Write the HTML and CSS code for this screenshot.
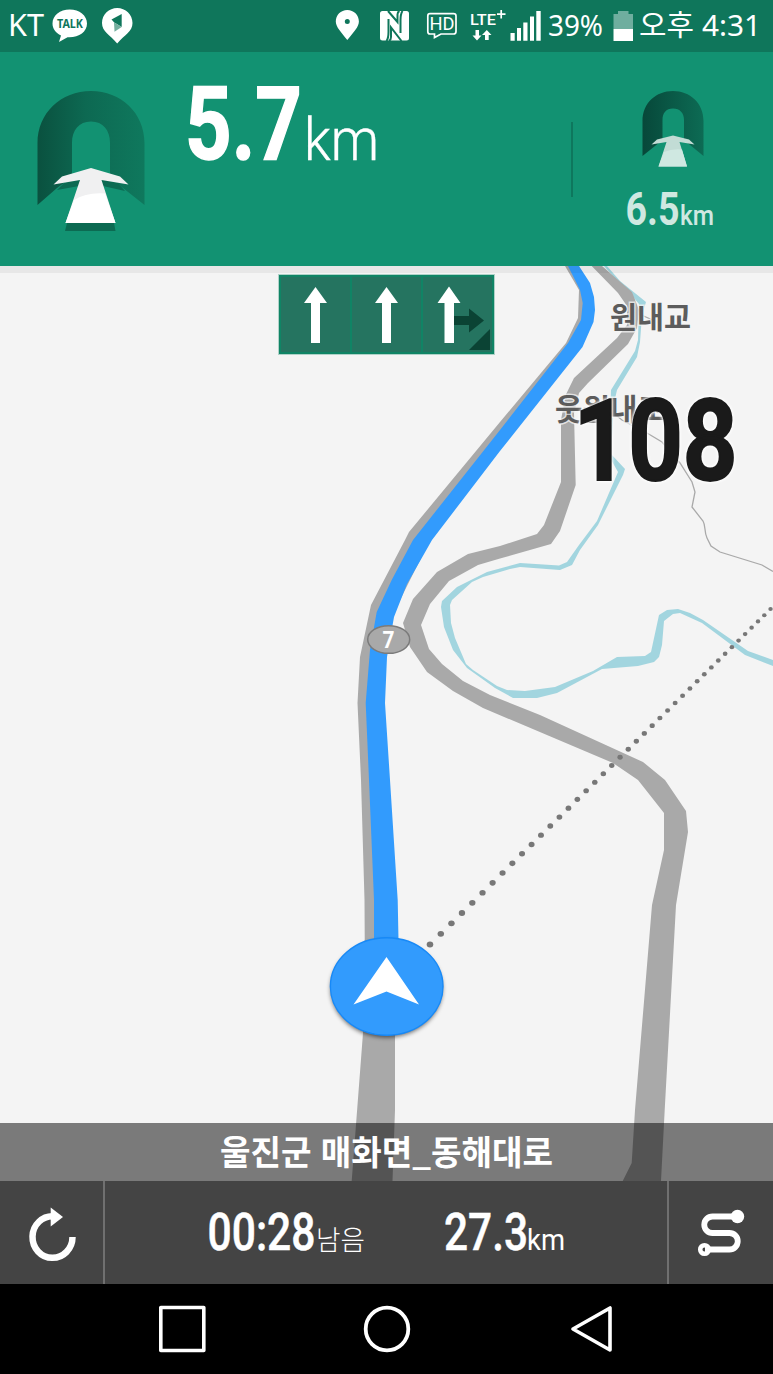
FILE: index.html
```html
<!DOCTYPE html>
<html lang="ko">
<head>
    <meta charset="UTF-8">
    <meta name="viewport" content="width=device-width, initial-scale=1.0">
    <title>Navigation</title>
    <link rel="stylesheet" href="styles.css">
</head>
<body>
    <div class="status-bar">
        <svg class="status-left" width="140" height="52" viewBox="0 0 140 52">
            <text x="8" y="36" font-size="31" textLength="36" lengthAdjust="spacingAndGlyphs">KT</text>
            <path d="M69.700 9.500C60 9.500 52.500 15.500 52.500 23.500C52.500 28.700 55.800 33 61 35.500L59 42L67.500 37.300C78.500 38 87 32 87 23.500C87 15.500 79.500 9.500 69.700 9.500Z"/>
            <text class="talk" x="57" y="28" font-size="12" textLength="26" lengthAdjust="spacingAndGlyphs">TALK</text>
            <path d="M117.200 8C109 8 102 14.500 102 23C102 32 110 34.500 117.200 43.500C124.500 34.500 132.500 32 132.500 23C132.500 14.500 125.500 8 117.200 8Z"/>
            <path fill="#0f765b" d="M111.500 19.500L121.700 14V27L114 22.200Z"/>
            <path fill="#73ae9e" d="M114 22.200L121.700 27L114.500 31.700Z"/>
        </svg>
        <svg class="status-right" width="453" height="52" viewBox="320 0 453 52">
            <path fill-rule="evenodd" d="M347.300 10C340.800 10 335.800 15 335.800 21.500C335.800 27 341 32 347.300 40C353.700 32 358.900 27 358.900 21.500C358.900 15 353.800 10 347.300 10ZM347.300 19A2.500 2.500 0 1 1 347.300 24A2.500 2.500 0 1 1 347.300 19Z"/>
            <rect x="380" y="11" width="29" height="29.500" rx="2.500"/>
            <path class="cut" d="M388 11L397.500 22V14.500Q397.500 12 399.500 11M401.500 41L391 27.500V37Q391 40 389 41M388.500 19V32Q388.500 38 386.500 41M400.500 33V20Q400.500 14 402.500 11"/>
            <path class="line" stroke-width="1.700" d="M430 13.700H453.500Q456 13.700 456 16V31.500Q456 34 453.500 34H441L434.500 37.500V34H430Q427.800 34 427.800 31.500V16Q427.800 13.700 430 13.700Z"/>
            <text class="hd" x="429.500" y="30.300" font-size="18.500" textLength="25" lengthAdjust="spacingAndGlyphs">HD</text>
            <text class="lte" x="470" y="25" font-size="15.500" textLength="26" lengthAdjust="spacingAndGlyphs">LTE</text>
            <path class="line" stroke-width="1.700" d="M501.200 10V18.500M497 14.200H505.500"/>
            <path d="M475.500 30H479V35.500H481.500L477 40.500L472.500 35.500H475.500ZM485 40H488.700V35H491.500L486.800 30L482 35H485Z"/>
            <path d="M510.500 33H514.700V40.700H510.500ZM517 28H521V40.700H517ZM523.300 22.500H527.500V40.700H523.300ZM530 16.500H534V40.700H530ZM536.300 11H540.700V40.700H536.300Z"/>
            <text x="548" y="36" font-size="29" textLength="55" lengthAdjust="spacingAndGlyphs">39%</text>
            <path fill="#6fae9f" d="M613.500 14H618V11H628.500V14H633V29H613.500Z"/>
            <path d="M613.500 29H633V41H613.500Z"/>
            <text x="639" y="36" font-size="29" textLength="55" lengthAdjust="spacingAndGlyphs">오후</text>
            <text x="702" y="36" font-size="29" textLength="59" lengthAdjust="spacingAndGlyphs">4:31</text>
        </svg>
    </div>

    <div class="guide">
        <div class="guide-now">
            <svg class="tunnel" width="108" height="141" viewBox="0 0 108 141">
                <defs>
                    <linearGradient id="arch">
                        <stop offset="0" stop-color="#0a513f"/>
                        <stop offset=".45" stop-color="#0d6952"/>
                        <stop offset="1" stop-color="#0f785d"/>
                    </linearGradient>
                </defs>
                <path fill="url(#arch)" d="M.500 114V52C.500 22 24 0 54 0S107.500 22 107.500 52V114L86 97L73 86V52C73 39 66 30.500 54 30.500S35 39 35 52V86L20 97Z"/>
                <path fill="#0c6a52" d="M20 99L27 92L54 83L81 92L88 100L66 95H42ZM30 132H77L78.500 140H28Z"/>
                <path fill="#f0f0f1" d="M54 77L83 85.500L91.500 93.500L64.500 89L78.500 132H28.500L43 89L16.500 93.500L25 85.500Z"/>
                <path fill="#fff" d="M37 109Q50 101 68 102.500L78.500 132H28.500Z"/>
            </svg>
            <svg class="distance" width="200" height="90" viewBox="180 78 200 90">
                <text class="num" x="185" y="159.300" font-size="102" textLength="117" lengthAdjust="spacingAndGlyphs">5.7</text>
                <text class="unit" x="304" y="159.500" font-size="59" textLength="75" lengthAdjust="spacingAndGlyphs">km</text>
            </svg>
        </div>
        <div class="guide-next">
            <svg width="62" height="76" viewBox="0 0 62 76">
                <defs>
                    <linearGradient id="archNext">
                        <stop offset="0" stop-color="#07483a"/>
                        <stop offset="1" stop-color="#0d6b54"/>
                    </linearGradient>
                </defs>
                <path fill="url(#archNext)" d="M.500 65V30C.500 12 14 0 31 0S61.500 12 61.500 30V65L42 49V29C42 22 38 17.500 31 17.500S20.500 22 20.500 29V49Z"/>
                <path fill="#c2dcd5" d="M31 44.500L47 48.500L52.500 53.500L37.500 51L45 75.500H16.500L24.500 51L9.500 53.500L15 48.500Z"/>
                <path fill="#cfe8e1" d="M22 61Q30 57.500 40 58.500L45 75.500H16.500Z"/>
            </svg>
            <svg class="next-distance" width="92" height="40" viewBox="624 190 92 40">
                <text class="num" x="625.500" y="225.300" font-size="46" textLength="54" lengthAdjust="spacingAndGlyphs">6.5</text>
                <text class="unit" x="680" y="225.300" font-size="27" textLength="34" lengthAdjust="spacingAndGlyphs">km</text>
            </svg>
        </div>
    </div>

    <div class="map">
        <svg class="map-canvas" width="773" height="915" viewBox="0 266 773 915">
            <!-- river -->
            <path class="river" d="M604 266L612 275L628 291L639 304L638 340L635 351L611 390L609 456L618 472L597 521L579 545L567 562L559 565.500L520 563L487 572L457 587L442 601L441 607L444 627L453 650L467 668L495 688L513 698L537 698L557 693L602 669L638 666L654 662L659 657L662 645L664 621L673 614L680 613L702 623L745 655L773 666V660L748 651L703 620L690 613L678 609L667 610L659 615L651 652L645 656L617 657L593 671L555 687L525 691L507 690L497 686L473 670L466 664L455 638L451 623L450 605L452 600L472 582L483 577L510 569L520 567L560 570L572 565L580 550L598 525L623 475L625 469L611 454L614 403L617 390L637 357L640 342L642 315L646 302L620 281L607 266Z"/>
            <!-- side paths -->
            <path class="trail" d="M639 314L655 321M604 406L622 420L647 433L662 442L680 463L692 482L695 492L692 507L703 521C706 526 704 532 707 538L711 546L720 552L762 565L773 571.500"/>
            <!-- roads -->
            <path class="road" d="M591.700 266L618 293L627 306V325L617 338L574 378L565.700 395L561 420V482L544 525L537 534L500 546L468 554L437 572L413 599L403 623L410 647L427 672L453 691L483 708L613 763L638 780L664 813V850L652 905L635 1110L631.700 1163L622.700 1181H661L664.700 1110L676 905L688 832L686 811L665 780L643 762L540 715L490 695L463 681L442 664L429 649L421 625L430 604L449 581L478 565L500 558.500L551 544L560 531L575.700 485L574 413L579 393L588 383L628 344L637 328L639 310L632 292L602 266Z"/>
            <path class="road" d="M565 266L579 290L578 318L566 343L500 422L409 532L405 540L371 605L360 657L357.500 703L361 780L364.500 900L365 990L363 1033L351.700 1181H392.500L395 1110V940H385L375 700L390 620L430 540L590 320L579 266Z"/>
            <path class="route" d="M568 266L580 290L582.700 303L581 320L568 343L500 430L413 540L391.700 580L376.700 612L370 650L365.700 703L369 780L374 900V970H398.500V940L397.700 900L390 780L385 703L387 657L394 617L407 584L432 540L500 451L582.500 347L593.500 322L595 310L594 297L590 283L579 266Z"/>
            <g id="bearing"></g>
            <ellipse class="shield" cx="388.700" cy="639.500" rx="21" ry="13.800"/>
            <text class="shield-no" x="382.500" y="648" font-size="23" textLength="12" lengthAdjust="spacingAndGlyphs">7</text>
            <text class="place" x="610" y="327.500" font-size="30" textLength="81" lengthAdjust="spacingAndGlyphs">원내교</text>
            <text class="place" x="555" y="420" font-size="30" textLength="110" lengthAdjust="spacingAndGlyphs">웃원내교</text>
            <ellipse class="puck-shadow" cx="386.500" cy="989" rx="56" ry="48.500"/>
            <ellipse class="puck" cx="386.700" cy="986.500" rx="56.300" ry="48.700"/>
            <path fill="#fff" d="M386.500 957L419 1004.500L386.500 991.500L353.500 1004.500Z"/>
            <text class="speed" x="573.500" y="480" font-size="114" textLength="164" lengthAdjust="spacingAndGlyphs">108</text>
        </svg>
        <div class="lanes">
            <div class="lane"><svg width="69" height="75" viewBox="0 0 69 75"><path fill="#fff" d="M34.500 10L46 26H39V66H30V26H23Z"/></svg></div>
            <div class="lane"><svg width="69" height="75" viewBox="0 0 69 75"><path fill="#fff" d="M34.500 10L46 26H39V66H30V26H23Z"/></svg></div>
            <div class="lane">
                <svg width="69" height="75" viewBox="0 0 69 75">
                    <path fill="#0b4334" d="M30 39H46V31.500L61 43.500L46 55.500V48H30ZM67 52V73H46Z"/>
                    <path fill="#fff" d="M26 9.500L37.500 26H31V66H21.500V26H14.500Z"/>
                </svg>
            </div>
        </div>
        <div class="address">
            <svg width="340" height="58" viewBox="217 1123 340 58">
                <text x="220" y="1165" font-size="34" textLength="333" lengthAdjust="spacingAndGlyphs">울진군 매화면_동해대로</text>
            </svg>
        </div>
    </div>

    <div class="trip-bar">
        <div class="trip-button">
            <svg width="50" height="56" viewBox="26 1204 50 56">
                <path class="line" stroke-width="6.500" d="M52.500 1215.300A20 20.800 0 1 0 71.500 1236"/>
                <path fill="#fff" d="M49.700 1206.500L62 1216L49.700 1225.500Z"/>
            </svg>
        </div>
        <div class="trip-info">
            <svg width="160" height="60" viewBox="208 1203 160 60">
                <text class="num" x="209.500" y="1250.300" font-size="52" textLength="108" lengthAdjust="spacingAndGlyphs">00:28</text>
                <text class="left" x="318" y="1250" font-size="27" textLength="49" lengthAdjust="spacingAndGlyphs">남음</text>
            </svg>
            <svg width="124" height="60" viewBox="444 1203 124 60">
                <text class="num" x="446" y="1250.300" font-size="52" textLength="84" lengthAdjust="spacingAndGlyphs">27.3</text>
                <text class="unit" x="529" y="1250.300" font-size="30" textLength="38" lengthAdjust="spacingAndGlyphs">km</text>
            </svg>
        </div>
        <div class="trip-button">
            <svg width="52" height="56" viewBox="696 1204 52 56">
                <path class="line" stroke-width="5.800" d="M738 1215.500H713.500A8.200 8.200 0 0 0 713.500 1232H730.500A8.200 8.200 0 0 1 730.500 1248.500H706"/>
                <circle fill="#fff" cx="738.500" cy="1215.500" r="6.700"/>
                <circle class="line" cx="705.500" cy="1248.500" r="4.300" stroke-width="4.500"/>
            </svg>
        </div>
    </div>

    <div class="nav-bar">
        <svg width="50" height="50" viewBox="0 0 50 50"><rect class="line" x="3.800" y="3.500" width="43" height="43" stroke-width="3.600" stroke-linejoin="round"/></svg>
        <svg width="50" height="50" viewBox="0 0 50 50"><circle class="line" cx="25" cy="25" r="21.300" stroke-width="3.800"/></svg>
        <svg width="50" height="50" viewBox="0 0 50 50"><path class="line" stroke-width="3.600" stroke-linejoin="round" d="M44 4V46L7 25Z"/></svg>
    </div>

    <script>
        // Straight line to the destination, dots get closer towards the horizon
        const bearing = document.getElementById('bearing');
        let x = 430;
        while (x < 776) {
            const y = 944.5 - (x - 430) * 0.985;
            const dot = document.createElementNS('http://www.w3.org/2000/svg', 'ellipse');
            dot.setAttribute('cx', x);
            dot.setAttribute('cy', y);
            dot.setAttribute('rx', 3.3 - (x - 430) * 0.0032);
            dot.setAttribute('ry', 3 - (x - 430) * 0.0028);
            bearing.appendChild(dot);
            x += 10.8 - (x - 430) * 0.0137;
        }
    </script>
</body>
</html>
```
FILE: styles.css
```css
* {
    margin: 0;
    padding: 0;
    box-sizing: border-box;
}

body {
    width: 773px;
    height: 1374px;
    display: flex;
    flex-direction: column;
    overflow: hidden;
    background: #000;
    font-family: Roboto, "Noto Sans CJK KR", sans-serif;
}

svg {
    display: block;
    flex: none;
    overflow: visible;
}

.line {
    fill: none;
    stroke: #fff;
}

.status-bar {
    height: 52px;
    display: flex;
    justify-content: space-between;
    background: #0f765b;
    fill: #fff;
    font-family: "Noto Sans", "Noto Sans CJK KR", sans-serif;
}

.status-bar .talk {
    fill: #0f765b;
    font-weight: bold;
}

.status-bar .cut {
    fill: none;
    stroke: #0f765b;
    stroke-width: 2;
}

.status-bar .hd,
.status-bar .lte {
    font-family: Roboto, sans-serif;
    font-weight: 500;
}

.status-bar .hd {
    font-weight: 400;
}

.guide {
    height: 214px;
    display: flex;
    background: #129272;
    fill: #fff;
}

.guide-now {
    width: 573px;
    height: 145px;
    display: flex;
    padding: 0 0 0 37px;
    background: linear-gradient(#0e775d, #0e775d) right 70px / 2px 75px no-repeat;
}

.tunnel {
    margin-top: 39px;
}

.distance {
    margin: 26px 0 0 35px;
}

.num {
    font-weight: 700;
}

.distance .num {
    stroke: #fff;
    stroke-width: 1.5;
}

.distance .unit {
    font-weight: 300;
    stroke: #fff;
    stroke-width: 0.4;
}

.guide-next {
    flex: 1;
    display: flex;
    flex-direction: column;
    align-items: center;
    padding: 39px 0 0;
    fill: #cfe8e1;
}

.next-distance {
    margin: 23px 6px 0 0;
}

.next-distance .unit {
    font-weight: 500;
}

.map {
    position: relative;
    height: 915px;
    background: #f4f4f4;
}

.map-canvas {
    overflow: hidden;
}

.map::before {
    content: "";
    position: absolute;
    inset: 0 0 auto;
    height: 7px;
    background: rgba(0, 0, 0, 0.05);
}

.river {
    fill: #a2d5df;
}

.trail {
    fill: none;
    stroke: #a9a9a9;
    stroke-width: 1.3;
}

.road {
    fill: #a9a9a9;
}

.route {
    fill: #329bfd;
}

#bearing {
    fill: #777;
}

.shield {
    fill: #a9a9a9;
    stroke: #7b7b7b;
    stroke-width: 1.5;
}

.shield-no {
    fill: #fff;
    font-weight: 700;
}

.place {
    fill: #5c5c5c;
    stroke: rgba(244, 244, 244, 0.75);
    stroke-width: 3;
    paint-order: stroke;
    font-weight: 700;
    font-family: "Noto Sans CJK KR", sans-serif;
}

.puck {
    fill: #329bfd;
    stroke: #1789f7;
    stroke-width: 1.4;
}

.puck-shadow {
    fill: rgba(0, 0, 0, 0.55);
    filter: blur(2px);
}

.speed {
    fill: #1a1a1a;
    stroke: #1a1a1a;
    stroke-width: 2;
    font-weight: 700;
    filter: drop-shadow(0 0 1.5px #fff) drop-shadow(0 0 1.5px #fff);
}

.lanes {
    position: absolute;
    left: 279px;
    top: 9px;
    display: flex;
    gap: 2px;
    padding: 2px;
    background: #108465;
    box-shadow: 0 0 0 1px rgba(16, 132, 101, 0.3);
}

.lane {
    background: #257460;
}

.address {
    position: absolute;
    inset: auto 0 0;
    height: 58px;
    display: flex;
    justify-content: center;
    background: rgba(0, 0, 0, 0.5);
    fill: #fff;
    font-weight: 700;
    font-family: "Noto Sans CJK KR", sans-serif;
}

.trip-bar {
    height: 103px;
    display: flex;
    background: #444;
    fill: #fff;
}

.trip-button {
    width: 104px;
    display: flex;
    align-items: center;
    justify-content: center;
}

.trip-info {
    flex: 1;
    display: flex;
    align-items: center;
    justify-content: center;
    gap: 76px;
    margin-left: -1px;
    border-left: 2px solid #707070;
    border-right: 2px solid #707070;
}

.trip-info .num {
    font-weight: 500;
    stroke: #fff;
    stroke-width: 0.5;
}

.trip-info .left {
    font-weight: 300;
}

.nav-bar {
    height: 90px;
    display: flex;
    align-items: center;
    justify-content: space-between;
    padding: 0 157px;
}
```
